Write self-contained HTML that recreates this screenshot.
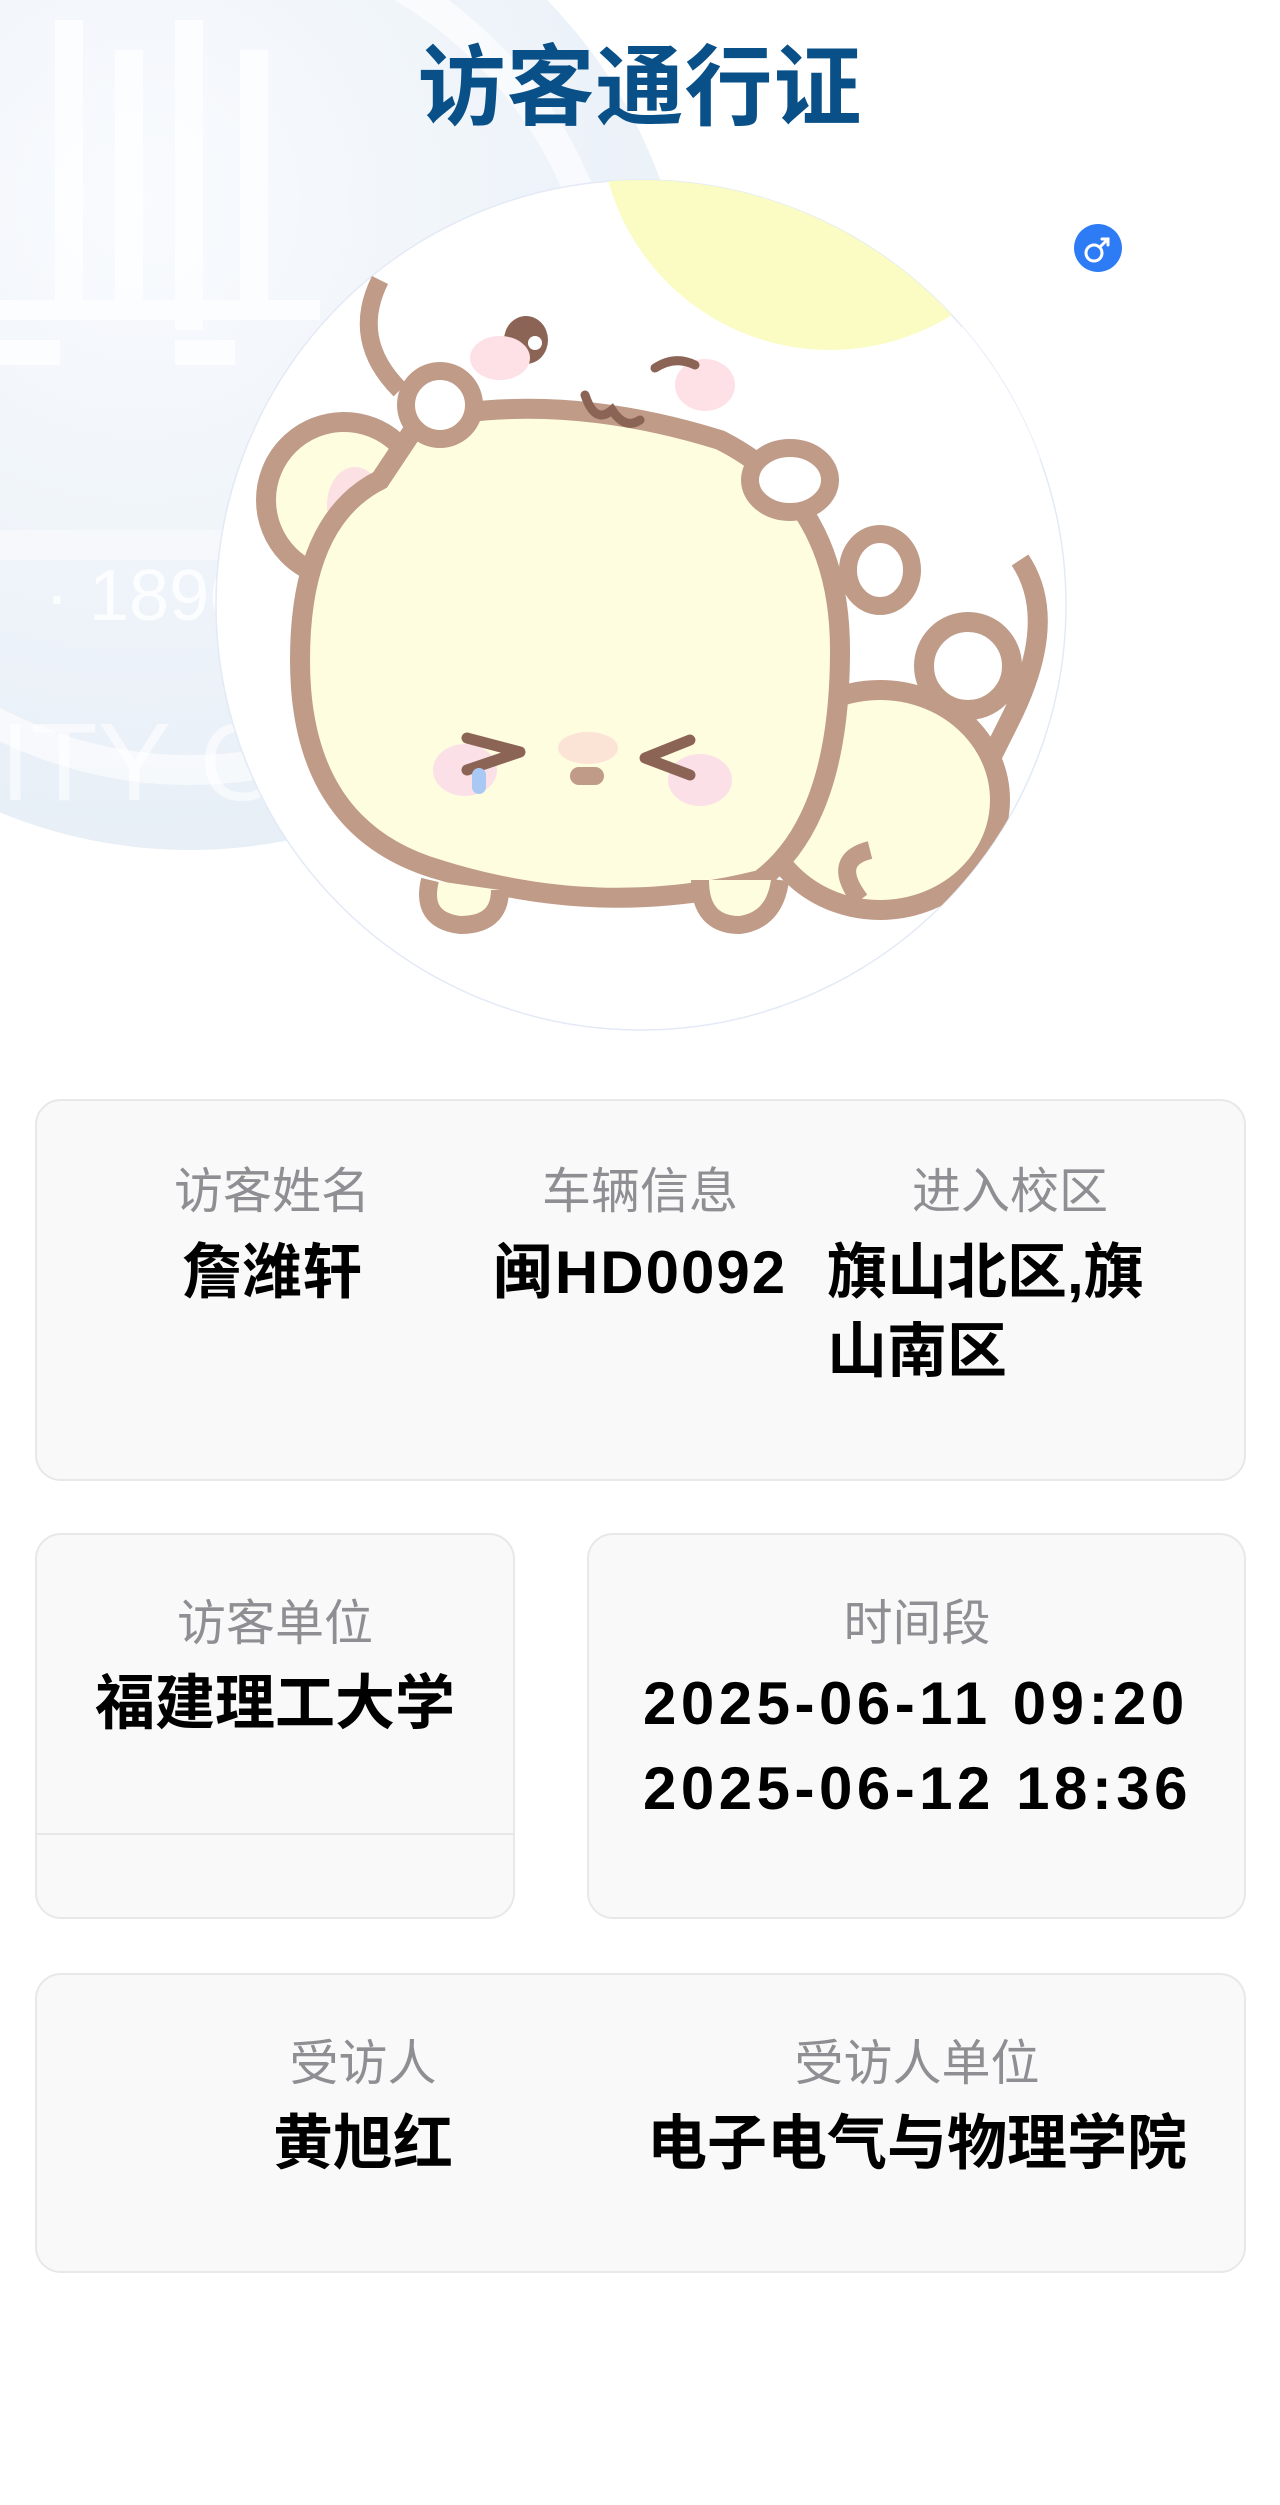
<!DOCTYPE html>
<html><head><meta charset="utf-8">
<style>
*{margin:0;padding:0;box-sizing:border-box}
html,body{width:1280px;height:2505px;background:#fff;overflow:hidden}
body{position:relative;font-family:"Liberation Sans","Noto Sans CJK SC",sans-serif}
.abs{position:absolute}
.title{left:0;width:1280px;top:38px;text-align:center;font-size:88px;font-weight:bold;color:#0a5088;line-height:100px;letter-spacing:1px}
.card{position:absolute;background:#f9f9f9;border:2px solid #e8e8e8;border-radius:26px}
.lab{position:absolute;color:#8e8e93;font-size:49px;line-height:60px;text-align:center;white-space:nowrap}
.val{position:absolute;color:#000;font-size:60px;font-weight:bold;line-height:80px;white-space:nowrap}
</style></head><body>
<svg class="abs" style="left:0;top:0" width="1280" height="1100">
  <defs>
    <radialGradient id="wm" cx="0.45" cy="0.35" r="0.7">
      <stop offset="0" stop-color="#f9fbfe"/><stop offset="1" stop-color="#e6eef6"/>
    </radialGradient>
    <clipPath id="cc"><circle cx="641" cy="605" r="425"/></clipPath>
  </defs>
  <circle cx="190" cy="350" r="500" fill="url(#wm)"/>
  <circle cx="190" cy="350" r="420" fill="none" stroke="#ffffff" stroke-width="30" opacity="0.6"/>
  <g fill="#ffffff" opacity="0.7">
    <rect x="55" y="20" width="28" height="280"/><rect x="115" y="50" width="28" height="250"/>
    <rect x="175" y="20" width="28" height="310"/><rect x="240" y="50" width="28" height="250"/>
    <rect x="0" y="300" width="320" height="20"/><rect x="0" y="340" width="60" height="25"/>
    <rect x="175" y="340" width="60" height="25"/><rect x="0" y="530" width="360" height="30" opacity="0.6"/>
  </g>
  <text x="45" y="620" font-family="Liberation Sans" font-size="72" fill="#ffffff" opacity="0.8">· 1896</text>
  <text x="0" y="800" font-family="Liberation Sans" font-size="110" fill="#ffffff" opacity="0.6">ITY O</text>
  <circle cx="641" cy="605" r="425" fill="#fff" stroke="#e3eaf6" stroke-width="1.5"/>
  <g clip-path="url(#cc)">
    <circle cx="830" cy="120" r="230" fill="#fbfcc4"/>
    <path d="M1000 260 Q950 330 930 430 L1080 470 L1080 250Z" fill="#fff"/>
    <path d="M1020 560 Q1060 620 1010 720 Q960 820 940 860" fill="none" stroke="#bf9b88" stroke-width="20"/>
    <ellipse cx="880" cy="800" rx="120" ry="110" fill="#fffde0" stroke="#bf9b88" stroke-width="20"/>
    <circle cx="968" cy="666" r="44" fill="#fff" stroke="#bf9b88" stroke-width="20"/>
    <path d="M860 900 Q830 860 870 850" fill="none" stroke="#bf9b88" stroke-width="18"/>
    <path d="M380 280 Q350 340 400 390" fill="none" stroke="#bf9b88" stroke-width="18"/>
    <ellipse cx="344" cy="500" rx="78" ry="78" fill="#fffde0" stroke="#bf9b88" stroke-width="20"/>
    <ellipse cx="355" cy="505" rx="28" ry="38" fill="#fbe0e4"/>
    <path d="M420 420 Q560 390 720 440 Q840 500 840 650 Q840 820 760 880 Q600 920 440 870 Q300 830 300 660 Q300 520 380 480 Z" fill="#fffde0" stroke="#bf9b88" stroke-width="20"/>
    <circle cx="440" cy="405" r="34" fill="#fff" stroke="#bf9b88" stroke-width="18"/>
    <ellipse cx="790" cy="480" rx="40" ry="32" fill="#fff" stroke="#bf9b88" stroke-width="18"/>
    <ellipse cx="880" cy="570" rx="32" ry="36" fill="#fff" stroke="#bf9b88" stroke-width="18"/>
    <path d="M430 880 Q420 920 460 925 Q500 925 500 890 M700 880 Q700 925 740 925 Q775 920 780 880" fill="#fffde0" stroke="#bf9b88" stroke-width="18"/>
    <ellipse cx="526" cy="340" rx="22" ry="24" fill="#8b6456"/>
    <circle cx="535" cy="343" r="7" fill="#fff"/>
    <ellipse cx="500" cy="358" rx="30" ry="22" fill="#fde1e7"/>
    <ellipse cx="705" cy="385" rx="30" ry="26" fill="#fde1e7"/>
    <path d="M655 368 Q675 355 695 365" fill="none" stroke="#8b6456" stroke-width="9" stroke-linecap="round"/>
    <path d="M585 395 Q595 425 612 410 Q625 430 640 420" fill="none" stroke="#8b6456" stroke-width="9" stroke-linecap="round"/>
    <ellipse cx="465" cy="770" rx="32" ry="26" fill="#fbe0e8"/>
    <ellipse cx="700" cy="780" rx="32" ry="26" fill="#fbe0e8"/>
    <ellipse cx="588" cy="748" rx="30" ry="16" fill="#fbe3d6"/>
    <path d="M467 738 L520 752 L467 770" fill="none" stroke="#8b6456" stroke-width="11" stroke-linecap="round" stroke-linejoin="round"/>
    <path d="M690 740 L645 758 L690 775" fill="none" stroke="#8b6456" stroke-width="11" stroke-linecap="round" stroke-linejoin="round"/>
    <rect x="472" y="768" width="14" height="26" rx="7" fill="#a9c8f3"/>
    <rect x="570" y="767" width="34" height="18" rx="9" fill="#bf9b88"/>
  </g>
  <circle cx="1098" cy="248" r="24" fill="#2d7cf6"/>
  <circle cx="1094" cy="253" r="8" fill="none" stroke="#fff" stroke-width="3"/>
  <path d="M1100 247 L1108 239 M1102 239 L1108 239 L1108 245" fill="none" stroke="#fff" stroke-width="3" stroke-linecap="round"/>
</svg>

<div class="abs title">访客通行证</div>

<div class="card" style="left:35px;top:1099px;width:1211px;height:382px"></div>
<div class="lab" style="left:172px;width:200px;top:1162px">访客姓名</div>
<div class="val" style="left:172px;width:200px;top:1233px;text-align:center">詹潍轩</div>
<div class="lab" style="left:540px;width:200px;top:1162px">车辆信息</div>
<div class="val" style="left:480px;width:320px;top:1233px;text-align:center;letter-spacing:2px">闽HD0092</div>
<div class="lab" style="left:910px;width:200px;top:1162px">进入校区</div>
<div class="val" style="left:827px;top:1233px">旗山北区,旗</div>
<div class="val" style="left:827px;top:1312px">山南区</div>

<div class="card" style="left:35px;top:1533px;width:480px;height:386px"></div>
<div class="abs" style="left:37px;top:1833px;width:476px;height:2px;background:#e6e6e6"></div>
<div class="lab" style="left:175px;width:200px;top:1594px">访客单位</div>
<div class="val" style="left:35px;width:480px;top:1664px;text-align:center">福建理工大学</div>

<div class="card" style="left:587px;top:1533px;width:659px;height:386px"></div>
<div class="lab" style="left:817px;width:200px;top:1594px">时间段</div>
<div class="val" style="left:643px;top:1664px;letter-spacing:4.5px">2025-06-11 09:20</div>
<div class="val" style="left:643px;top:1749px;letter-spacing:4.5px">2025-06-12 18:36</div>

<div class="card" style="left:35px;top:1973px;width:1211px;height:300px"></div>
<div class="lab" style="left:263px;width:200px;top:2034px">受访人</div>
<div class="val" style="left:263px;width:200px;top:2104px;text-align:center">黄旭红</div>
<div class="lab" style="left:767px;width:300px;top:2034px">受访人单位</div>
<div class="val" style="left:617px;width:600px;top:2104px;text-align:center">电子电气与物理学院</div>
</body></html>
